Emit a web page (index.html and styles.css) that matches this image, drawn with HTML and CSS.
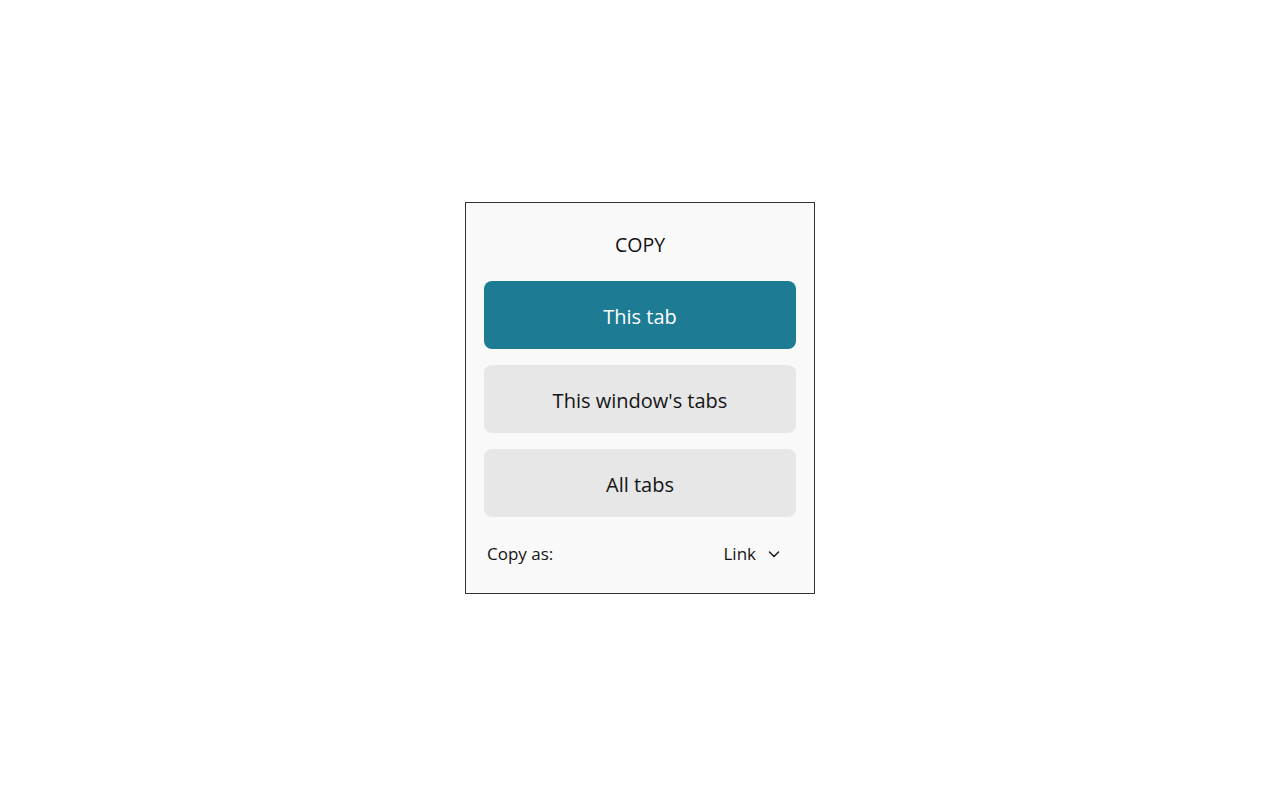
FILE: index.html
```html
<!DOCTYPE html>
<html>
<head>
<meta charset="utf-8">
<link rel="stylesheet" href="styles.css">
</head>
<body>
<div class="page">
  <div class="panel">
    <div class="title">COPY</div>
    <div class="buttons">
      <button class="btn primary">This tab</button>
      <button class="btn">This window's tabs</button>
      <button class="btn">All tabs</button>
    </div>
    <div class="footer">
      <span class="label">Copy as:</span>
      <span class="select">Link
        <svg class="chev" width="14" height="14" viewBox="0 0 14 14"><path d="M2.5 5 L7 9.5 L11.5 5" fill="none" stroke="#1a1a1a" stroke-width="1.5" stroke-linecap="round" stroke-linejoin="round"/></svg>
      </span>
    </div>
  </div>
</div>
</body>
</html>
```
FILE: styles.css
```css
html, body {
  margin: 0;
  padding: 0;
  background: #ffffff;
}
body {
  font-family: "Open Sans", "Noto Sans", sans-serif;
  color: #141414;
}
.page {
  width: 1280px;
  height: 800px;
  display: flex;
  justify-content: center;
  padding-top: 202px;
  box-sizing: border-box;
}
.panel {
  width: 350px;
  height: 392px;
  box-sizing: border-box;
  border: 1px solid #333333;
  background: #f9f9f9;
  padding: 0 18px;
  display: flex;
  flex-direction: column;
}
.title {
  text-align: center;
  font-size: 19.5px;
  line-height: 24px;
  margin-top: 30px;
  height: 24px;
  color: #111;
}
.buttons {
  margin-top: 24px;
  display: flex;
  flex-direction: column;
  gap: 16px;
}
.btn {
  height: 68px;
  border: none;
  border-radius: 8px;
  background: #e7e7e7;
  font-family: inherit;
  font-size: 20px;
  color: #141414;
  padding: 3px 0 0;
  cursor: pointer;
}
.btn.primary {
  background: #1d7b94;
  color: #ffffff;
}
.footer {
  margin-top: 25px;
  display: flex;
  justify-content: space-between;
  align-items: center;
  font-size: 17px;
  line-height: 24px;
  padding: 0 15px 0 3px;
}
.select {
  display: flex;
  align-items: center;
  gap: 11px;
}
.chev {
  display: block;
}
```
